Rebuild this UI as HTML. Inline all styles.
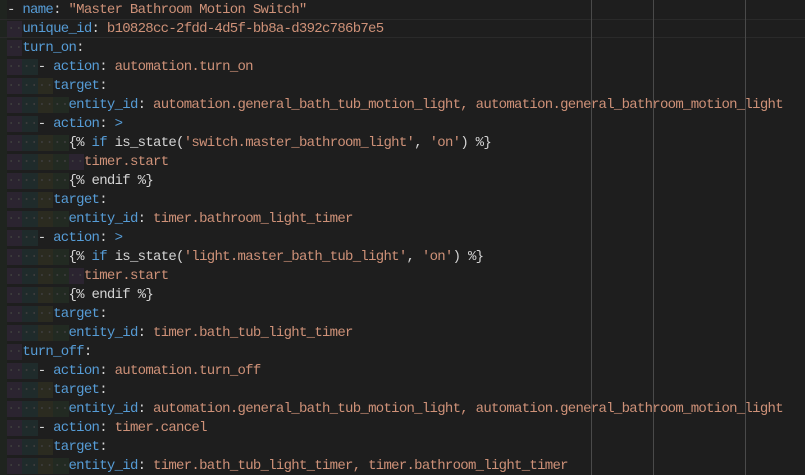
<!DOCTYPE html>
<html><head><meta charset="utf-8"><style>
html,body{margin:0;padding:0;background:#1e1e1e;width:805px;height:475px;overflow:hidden}
.ed{position:relative;width:805px;height:475px;background:#1e1e1e}
.m{position:absolute;left:0;top:0;width:7px;height:475px;background:#1f241f}
.r{position:absolute;top:0;width:1px;height:475px;background:#4a4a4a}
.cur{position:absolute;left:0;top:19px;width:805px;height:17px;border-top:1px solid #2a2a2a;border-bottom:1px solid #2a2a2a}
pre{position:absolute;left:7px;top:1px;margin:0;font-family:"Liberation Mono",monospace;font-size:14px;letter-spacing:-0.72px;line-height:19px;color:#d4d4d4;white-space:pre}
.k{color:#569cd6}.s{color:#ce9178}.w{color:#d4d4d4}
.d{color:#3c3c3c}
.b1{background:#2b2430}.b2{background:#1f2b2b}.b3{background:#2b2b20}.b4{background:#222a22}
</style></head><body><div class="ed">
<div class="m"></div>
<div class="cur"></div>
<div class="r" style="left:591px"></div>
<div class="r" style="left:653px"></div>
<div class="r" style="left:745px"></div>
<pre><span class="w">- </span><span class="k">name</span>: <span class="s">"Master Bathroom Motion Switch"</span>
<span class="b1 d">··</span><span class="k">unique_id</span>: <span class="s">b10828cc-2fdd-4d5f-bb8a-d392c786b7e5</span>
<span class="b1 d">··</span><span class="k">turn_on</span>:
<span class="b1 d">··</span><span class="b2 d">··</span>- <span class="k">action</span>: <span class="s">automation.turn_on</span>
<span class="b1 d">··</span><span class="b2 d">··</span><span class="b3 d">··</span><span class="k">target</span>:
<span class="b1 d">··</span><span class="b2 d">··</span><span class="b3 d">··</span><span class="b4 d">··</span><span class="k">entity_id</span>: <span class="s">automation.general_bath_tub_motion_light, automation.general_bathroom_motion_light</span>
<span class="b1 d">··</span><span class="b2 d">··</span>- <span class="k">action</span>: <span class="k">&gt;</span>
<span class="b1 d">··</span><span class="b2 d">··</span><span class="b3 d">··</span><span class="b4 d">··</span>{% <span class="k">if</span> is_state(<span class="s">'switch.master_bathroom_light'</span>, <span class="s">'on'</span>) %}
<span class="b1 d">··</span><span class="b2 d">··</span><span class="b3 d">··</span><span class="b4 d">··</span><span class="b1 d">··</span><span class="s">timer.start</span>
<span class="b1 d">··</span><span class="b2 d">··</span><span class="b3 d">··</span><span class="b4 d">··</span>{% endif %}
<span class="b1 d">··</span><span class="b2 d">··</span><span class="b3 d">··</span><span class="k">target</span>:
<span class="b1 d">··</span><span class="b2 d">··</span><span class="b3 d">··</span><span class="b4 d">··</span><span class="k">entity_id</span>: <span class="s">timer.bathroom_light_timer</span>
<span class="b1 d">··</span><span class="b2 d">··</span>- <span class="k">action</span>: <span class="k">&gt;</span>
<span class="b1 d">··</span><span class="b2 d">··</span><span class="b3 d">··</span><span class="b4 d">··</span>{% <span class="k">if</span> is_state(<span class="s">'light.master_bath_tub_light'</span>, <span class="s">'on'</span>) %}
<span class="b1 d">··</span><span class="b2 d">··</span><span class="b3 d">··</span><span class="b4 d">··</span><span class="b1 d">··</span><span class="s">timer.start</span>
<span class="b1 d">··</span><span class="b2 d">··</span><span class="b3 d">··</span><span class="b4 d">··</span>{% endif %}
<span class="b1 d">··</span><span class="b2 d">··</span><span class="b3 d">··</span><span class="k">target</span>:
<span class="b1 d">··</span><span class="b2 d">··</span><span class="b3 d">··</span><span class="b4 d">··</span><span class="k">entity_id</span>: <span class="s">timer.bath_tub_light_timer</span>
<span class="b1 d">··</span><span class="k">turn_off</span>:
<span class="b1 d">··</span><span class="b2 d">··</span>- <span class="k">action</span>: <span class="s">automation.turn_off</span>
<span class="b1 d">··</span><span class="b2 d">··</span><span class="b3 d">··</span><span class="k">target</span>:
<span class="b1 d">··</span><span class="b2 d">··</span><span class="b3 d">··</span><span class="b4 d">··</span><span class="k">entity_id</span>: <span class="s">automation.general_bath_tub_motion_light, automation.general_bathroom_motion_light</span>
<span class="b1 d">··</span><span class="b2 d">··</span>- <span class="k">action</span>: <span class="s">timer.cancel</span>
<span class="b1 d">··</span><span class="b2 d">··</span><span class="b3 d">··</span><span class="k">target</span>:
<span class="b1 d">··</span><span class="b2 d">··</span><span class="b3 d">··</span><span class="b4 d">··</span><span class="k">entity_id</span>: <span class="s">timer.bath_tub_light_timer, timer.bathroom_light_timer</span></pre>
</div></body></html>
